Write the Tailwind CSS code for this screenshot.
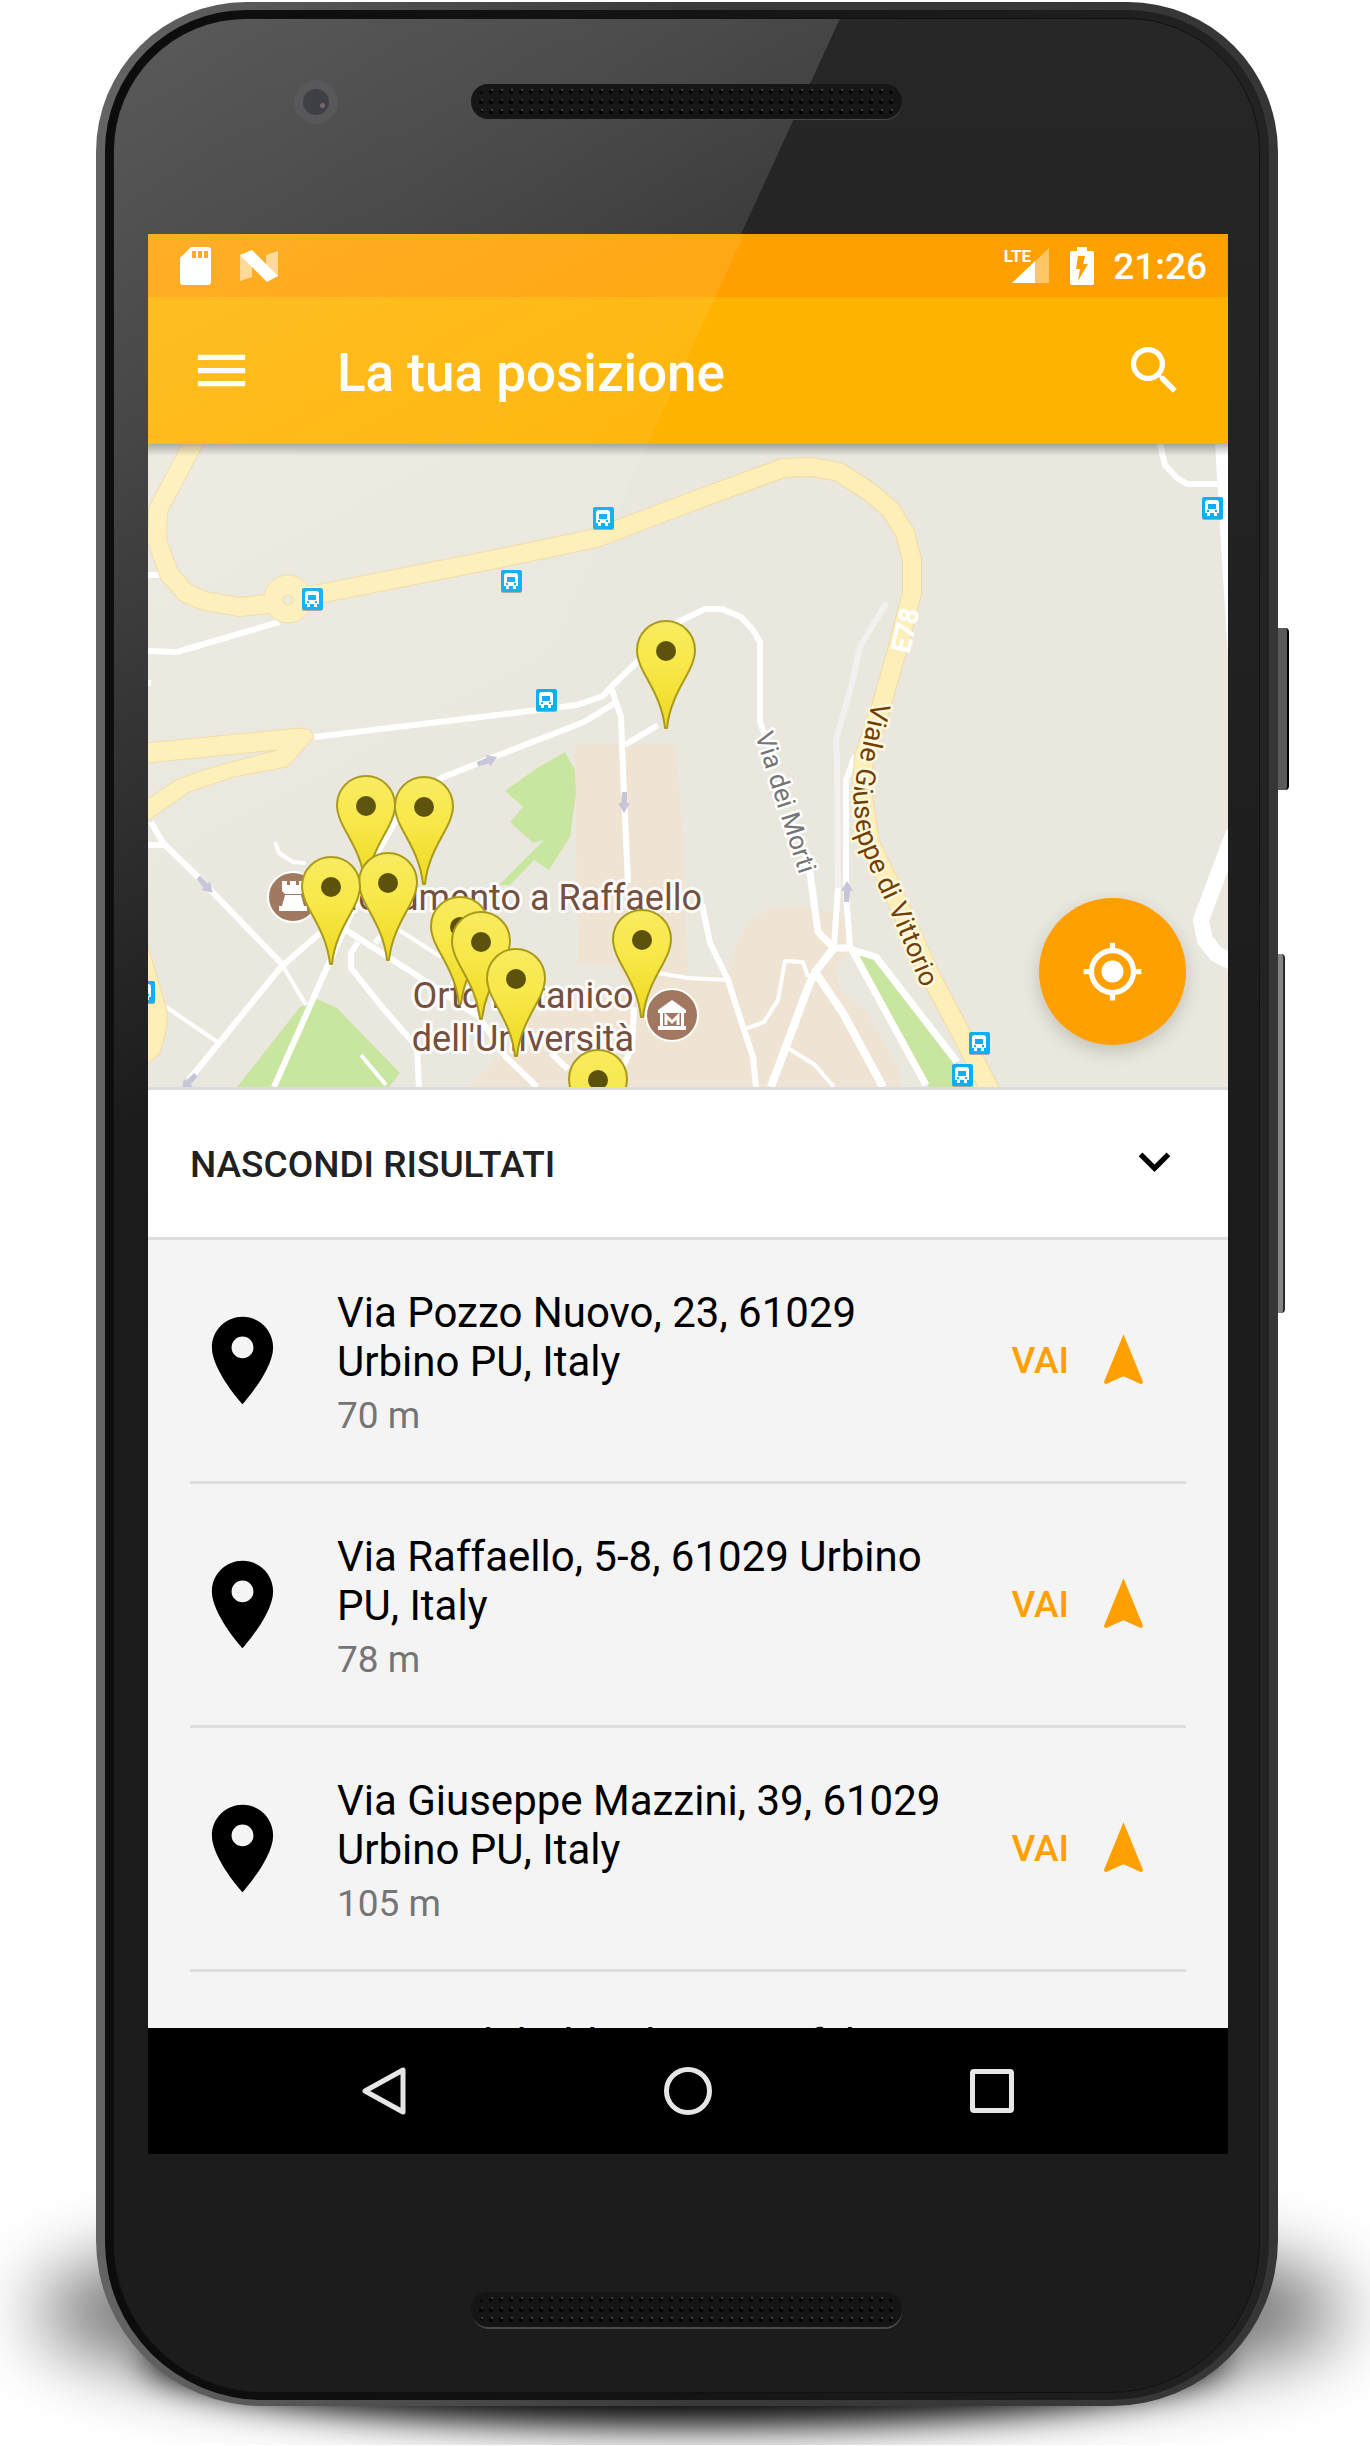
<!DOCTYPE html>
<html lang="it">
<head>
<meta charset="utf-8">
<meta name="viewport" content="width=device-width, initial-scale=1">
<title>La tua posizione</title>
<script src="https://cdn.jsdelivr.net/npm/@tailwindcss/browser@4"></script>
</head>
<body class="bg-white font-['Roboto',sans-serif]">
<div class="relative overflow-hidden pt-[2px] pr-[92px] pb-[39px] pl-[96px]">

  <!-- ground shadow -->
  <svg class="absolute inset-x-0 bottom-0 h-[346px] w-full" viewBox="0 0 1370 346" preserveAspectRatio="none" aria-hidden="true">
    <defs>
      <filter id="wide" x="-20%" y="-80%" width="140%" height="260%"><feGaussianBlur stdDeviation="38"/></filter>
      <filter id="soft" x="-20%" y="-80%" width="140%" height="260%"><feGaussianBlur stdDeviation="17"/></filter>
    </defs>
    <ellipse cx="690" cy="212" rx="655" ry="92" fill="#000" opacity=".6" filter="url(#wide)"/>
    <ellipse cx="685" cy="258" rx="540" ry="66" fill="#000" filter="url(#soft)"/>
  </svg>

  <div class="relative">
    <!-- side keys -->
    <div class="absolute top-[626px] left-full h-[162px] w-[11px] rounded-r-sm border-r-2 border-black bg-[#5a5a5a]"></div>
    <div class="absolute top-[952px] left-full h-[359px] w-[7px] rounded-r-sm border-r-2 border-[#2a2a2a] bg-[#858585]"></div>

    <div class="rounded-t-[150px] rounded-b-[166px] bg-linear-to-r from-[#646465] via-[#3a3a3b] to-[#363637] px-[9px] pt-[8px] pb-[6px]">
      <div class="rounded-t-[141px] rounded-b-[158px] bg-linear-to-r from-[#0c0c0c] via-[#141414] to-[#232323] pt-[8px] pr-[9px] pb-[7px] pl-[8px]">
        <div class="relative overflow-hidden rounded-t-[133px] rounded-b-[150px] border border-[#111] bg-linear-to-b from-[#272728] via-[#1b1b1c] to-[#1c1c1d]">
          <svg class="absolute inset-x-0 top-0 h-[1600px] w-full" viewBox="0 0 1147 1600" preserveAspectRatio="none" aria-hidden="true">
            <defs><linearGradient id="glare" gradientUnits="userSpaceOnUse" x1="0" y1="0" x2="520" y2="760">
              <stop offset="0" stop-color="#fff" stop-opacity=".24"/><stop offset=".35" stop-color="#fff" stop-opacity=".17"/><stop offset="1" stop-color="#fff" stop-opacity="0"/>
            </linearGradient></defs>
            <path d="M0 0H727L0 1580Z" fill="url(#glare)"/>
          </svg>

          <!-- upper bezel -->
          <div class="relative grid h-[215px] grid-cols-[1fr_432px_1fr] items-center pb-[50px]">
            <div class="ml-[180px] flex size-[44px] items-center justify-center rounded-full bg-[#58585a]">
              <div class="flex size-[26px] items-center justify-end rounded-full bg-[#3f3f46] pt-2 pr-1"><div class="size-[5px] rounded-full bg-[#7c6468]"></div></div>
            </div>
            <svg class="h-[36px] w-full" viewBox="0 0 432 36" aria-hidden="true">
              <defs><pattern id="holes" width="10" height="20" patternUnits="userSpaceOnUse" patternTransform="translate(5 -2)">
                <circle cx="5" cy="10" r="2" fill="#000"/><circle cx="6" cy="8" r="1" fill="#4c4c4c"/>
                <circle cx="5" cy="0" r="2" fill="#000"/><circle cx="5" cy="20" r="2" fill="#000"/><circle cx="6" cy="18" r="1" fill="#3c3c3c"/>
              </pattern></defs>
              <rect x="1" y="1" width="430" height="35" rx="17" fill="#4a4a4a"/>
              <rect width="431" height="35" rx="17" fill="#161616"/>
              <rect x="6" y="4" width="420" height="28" rx="14" fill="url(#holes)"/>
            </svg>
          </div>

          <!-- screen -->
          <main class="relative mr-[31px] ml-[34px] overflow-hidden bg-[#f4f4f4]">
            <div class="flex h-[63px] items-center bg-[#ffa000] pr-[21px] pl-[32px] text-white">
              <svg class="h-[38px] w-[31px]" viewBox="0 0 31 38" fill="#fff" aria-hidden="true"><path fill-rule="evenodd" d="M11 0H28a3 3 0 0 1 3 3V35a3 3 0 0 1-3 3H3a3 3 0 0 1-3-3V11ZM12 4v7h4V4ZM18 4v7h4V4ZM24 4v7h4V4Z"/></svg>
              <svg class="ml-[29px] h-[32px] w-[38px]" viewBox="0 0 38 32" fill="#fff" aria-hidden="true"><path opacity=".55" d="M0 4 12 12V27L0 31ZM26 5 38 1V27L26 19Z"/><path d="M0 5 12 0 38 26 27 32Z"/></svg>
              <div class="relative ml-auto h-[38px] w-[46px]">
                <svg class="size-full" viewBox="0 0 46 38" fill="#fff" aria-hidden="true"><path opacity=".4" d="M46 1V36H9Z"/><path d="M32 14V36H9Z"/><path d="M0 0H28V19H0Z" fill="#ffa000"/></svg>
                <span class="absolute top-0 right-[18px] text-[17px] leading-[18px] font-bold">LTE</span>
              </div>
              <svg class="ml-[21px] h-[38px] w-[24px]" viewBox="0 0 24 38" fill="#fff" aria-hidden="true"><path fill-rule="evenodd" d="M7 0H17V4H22a2 2 0 0 1 2 2V36a2 2 0 0 1-2 2H2a2 2 0 0 1-2-2V6a2 2 0 0 1 2-2H7ZM8 9 6 22H10L8 34 18 17H13L15 9Z"/></svg>
              <time class="ml-[19px] pt-[2px] text-[37px] leading-[43px] font-medium">21:26</time>
            </div>

            <header class="flex h-[147px] items-center bg-[#ffb300] px-[42px] text-white">
              <button type="button" aria-label="Menu" class="size-[63px]"><svg viewBox="0 0 24 24" fill="#fff"><path d="M3 18h18v-2H3v2zm0-5h18v-2H3v2zm0-7v2h18V6H3z"/></svg></button>
              <h1 class="ml-[84px] flex-1 pt-1 text-[53px] leading-[62px] font-medium">La tua posizione</h1>
              <button type="button" aria-label="Cerca" class="size-[63px]"><svg viewBox="0 0 24 24" fill="#fff"><path d="M15.5 14h-.79l-.28-.27A6.471 6.471 0 0 0 16 9.5 6.5 6.5 0 1 0 9.5 16c1.61 0 3.09-.59 4.23-1.57l.27.28v.79l5 4.99L20.49 19l-4.99-5zm-6 0C7.01 14 5 11.99 5 9.5S7.01 5 9.5 5 14 7.01 14 9.5 11.99 14 9.5 14z"/></svg></button>
            </header>

            <section class="relative" aria-label="Mappa">
              <svg class="block w-full" viewBox="0 0 1080 643" fill="none" stroke-linejoin="round">
                <defs>
                  <linearGradient id="pinfill" x1="0" y1="0" x2="0" y2="1"><stop offset="0" stop-color="#f8eb5f"/><stop offset=".4" stop-color="#f8e84a"/><stop offset="1" stop-color="#eed91f"/></linearGradient>
                  <g id="pin"><path d="M0 1C16 1 29 14 29 30 29 52 5 70 1 108H-1C-5 70-29 52-29 30-29 14-16 1 0 1Z" fill="url(#pinfill)" stroke="#a99a1c" stroke-width="2"/><circle cy="31" r="10" fill="#5c520c"/></g>
                  <g id="bus"><rect x="-10" y="-10" width="21" height="22" rx="2" fill="#a9a79e"/><rect x="-10" y="-11" width="21" height="22" rx="2" fill="#0daef2"/><path fill="#fff" fill-rule="evenodd" d="M-4-8H4Q7-8 7-5V5H5V8H2V5H-2V8H-5V5H-7V-5Q-7-8-4-8ZM-4-4V1H4V-4ZM-5 2V4H-3V2ZM3 2V4H5V2Z"/></g>
                  <path id="flow" d="M-2-10H3V1H6L0 11-6 1H-3Z" fill="#c6c6d8"/>
                  <path id="viale" d="M724 258 713 309 705 350 709 393 724 429 746 476 784 568"/>
                  <path id="morti" d="M607 291 635 379 656 445"/>
                </defs>
                <rect width="1080" height="643" fill="#eae8de"/>
                <path fill="#efe4d3" d="M427 300H528L534 380 540 533 581 530 590 495 605 474 626 463H667L700 475 705 503 688 523 692 546 719 569 750 623 753 643H320L344 619 379 573 482 549 470 523 430 519Z"/>
                <g fill="#c9e6a1">
                  <path d="M417 308 427 326 428 349 422 393 401 426 386 416 362 441H351L396 396 385 399 362 378 375 363 357 347 389 324Z"/>
                  <path d="M152 563 169 555 189 564 252 629 241 643H89Z"/>
                  <path d="M710 509 728 514 809 618 826 643H781Z"/>
                </g>
                <!-- minor roads -->
                <g stroke="#fff" stroke-width="6">
                  <path d="M0 207 29 208 131 178M0 131H14M0 239H3"/>
                  <path d="M166 293 382 267 429 261 455 252 463 243 489 218 530 178 557 165H574L593 173 605 186 612 198V278L620 300"/>
                  <path d="M463 243 473 273 475 326 480 439"/>
                  <path d="M467 259 436 278 351 311 293 334 248 376 227 413 196 486 181 519 126 643"/>
                  <path d="M477 301 510 281"/>
                  <path d="M659 420 662 429 670 488 686 504H702" stroke-width="7"/>
                  <path d="M707 312 698 336V449L702 504"/>
                  <path d="M690 444 686 503"/>
                  <path d="M1012 0 1017 21 1029 34 1039 40H1069"/>
                  <path d="M686 504 667 528 659 546 623 643M667 528 695 569 735 643" stroke-width="8"/>
                  <path d="M702 505 728 513 809 618M704 506 778 641" stroke-width="7"/>
                  <path d="M554 460 562 499 580 536 595 583 605 613 608 643"/>
                  <path d="M660 533 655 518 637 517 630 556 616 578 597 585M510 529 540 534 580 536M640 604 667 621 686 643" stroke-width="4"/>
                  <path d="M3 378 15 399 50 433 133 519M0 401H15"/>
                  <path d="M133 519 158 561M15 561 71 599" stroke-width="4"/>
                  <path d="M172 489 133 523 71 599 41 636"/>
                  <path d="M127 398 131 409 145 418 158 419M251 486 293 513M213 611 238 641" stroke-width="4"/>
                  <path d="M198 486 265 529 331 573 358 613 389 643M210 498 203 509V524L234 563 269 603 271 643M227 499 240 484M486 563 484 603 472 629M403 609 420 625"/>
                  <path d="M1086 388 1053 476 1057 496 1068 510 1084 518" stroke-width="16" stroke-linejoin="miter"/>
                </g>
                <path d="M738 159 712 203 704 239 688 296 689 316 690 444" stroke="#f3f0ef" stroke-width="6"/>
                <path d="M1067 0H1080V213L1072 83Z" fill="#fff"/>
                <!-- main roads -->
                <g fill="#feefb8" stroke="#eedba6" stroke-width="1">
                  <path d="M-2 299 151 284 162 286 166 293 139 323 86 333 41 348-2 378V356L28 336 55 326 83 318 129 306-2 319Z"/>
                  <path d="M-2 495 7 526 19 566V583L12 609-2 621Z"/>
                  <circle cx="140" cy="155" r="24"/>
                </g>
                <path d="M47-4 10 66 9 96 21 130 38 149 57 157 91 163 119 160 140 155 176 149 358 113 448 94 540 59 635 24 664 23 691 28 722 48 743 66 757 89 764 116V149L750 203 733 263 716 313 714 346 722 399 743 443 781 529 815 593 843 648" stroke="#eedba6" stroke-width="20"/>
                <path d="M47-4 10 66 9 96 21 130 38 149 57 157 91 163 119 160 140 155 176 149 358 113 448 94 540 59 635 24 664 23 691 28 722 48 743 66 757 89 764 116V149L750 203 733 263 716 313 714 346 722 399 743 443 781 529 815 593 843 648" stroke="#feefb8" stroke-width="18"/>
                <circle cx="140" cy="155" r="23" fill="#feefb8"/><circle cx="140" cy="156" r="5" fill="#f1ead0" stroke="#e5d9b0"/>
                <use href="#flow" transform="translate(339 317) rotate(-112)"/><use href="#flow" x="476" y="358"/>
                <use href="#flow" transform="translate(699 448) rotate(180)"/><use href="#flow" transform="translate(57 441) rotate(-45)"/><use href="#flow" transform="translate(41 638) rotate(40)"/>
                <!-- transit stops -->
                <use href="#bus" x="455" y="74"/><use href="#bus" x="363" y="137"/><use href="#bus" x="164" y="155"/><use href="#bus" x="398" y="256"/>
                <use href="#bus" x="1064" y="64"/><use href="#bus" x="-4" y="548"/><use href="#bus" x="831" y="599"/><use href="#bus" x="814" y="631"/>
                <!-- points of interest -->
                <g stroke="#fff" stroke-width="2" fill="#a1785f"><circle cx="145" cy="453" r="25"/><circle cx="524" cy="571" r="26"/></g>
                <path fill="#fff" d="M134 437H139V441H142V437H148V441H151V437H156V447L153 450H137L134 447ZM137 451H153L156 462H159V467H131V462H134Z"/>
                <path fill="#fff" fill-rule="evenodd" d="M524 556 538 566V569H536V582H538V586H510V582H512V569H510V566ZM515 569V582H533V569Z"/>
                <path d="M518 581V572L524 578 530 572V581" stroke="#fff" stroke-width="3" stroke-linejoin="miter"/>
                <!-- labels -->
                <g class="font-['Roboto',sans-serif]" stroke-linejoin="round" paint-order="stroke">
                  <g fill="#75503f" stroke="#fff" stroke-opacity=".85" stroke-width="6" font-size="36">
                    <text x="554" y="466" text-anchor="end">Monumento a Raffaello</text>
                    <text x="375" y="564" text-anchor="middle">Orto Botanico</text>
                    <text x="375" y="607" text-anchor="middle">dell'Università</text>
                  </g>
                  <text fill="#fff" font-size="26" font-weight="500" stroke="#fff" stroke-width="1" transform="translate(761 210) rotate(-77)">E78</text>
                  <text fill="#757575" stroke="#fff" stroke-width="5" font-size="26"><textPath href="#morti">Via dei Morti</textPath></text>
                  <text fill="#713f05" stroke="#fff8dc" stroke-width="5" font-size="27"><textPath href="#viale">Viale Giuseppe di Vittorio</textPath></text>
                </g>
                <!-- result markers -->
                <use href="#pin" x="518" y="176"/><use href="#pin" x="218" y="331"/><use href="#pin" x="276" y="332"/>
                <use href="#pin" x="240" y="408"/><use href="#pin" x="183" y="412"/><use href="#pin" x="312" y="452"/>
                <use href="#pin" x="333" y="467"/><use href="#pin" x="494" y="465"/><use href="#pin" x="368" y="504"/><use href="#pin" x="450" y="605"/>
              </svg>
              <div class="absolute inset-x-0 top-0 h-[12px] bg-linear-to-b from-black/30 to-transparent"></div>
              <button type="button" aria-label="La mia posizione" class="absolute right-[42px] bottom-[42px] flex size-[147px] items-center justify-center rounded-full bg-[#ffa000] shadow-[0_6px_18px_rgba(0,0,0,0.18)]">
                <svg class="size-[63px]" viewBox="0 0 24 24" fill="#fff"><circle cx="12" cy="12" r="4.2"/><path d="M20.94 11A8.994 8.994 0 0 0 13 3.06V1h-2v2.06A8.994 8.994 0 0 0 3.06 11H1v2h2.06A8.994 8.994 0 0 0 11 20.94V23h2v-2.06A8.994 8.994 0 0 0 20.94 13H23v-2h-2.06zM12 19c-3.87 0-7-3.13-7-7s3.13-7 7-7 7 3.13 7 7-3.13 7-7 7z"/></svg>
              </button>
            </section>

            <button type="button" class="flex h-[153px] w-full items-center justify-between border-y-[3px] border-[#dcdcdc] bg-white px-[42px] text-[37px] leading-[43px] font-medium text-[#212121]">
              <span class="pt-[2px]">NASCONDI RISULTATI</span>
              <svg class="size-[63px]" viewBox="0 0 24 24" fill="#000" aria-hidden="true"><path d="M7.41 7.84 12 12.42l4.59-4.58L18 9.25l-6 6-6-6z"/></svg>
            </button>

            <ul class="h-[788px] overflow-hidden px-[42px]">
              <li class="flex h-[244px] items-center border-b-[3px] border-[#dedede]">
                <svg class="size-[105px] shrink-0" viewBox="0 0 24 24" aria-hidden="true"><path d="M12 2C8.13 2 5 5.13 5 9c0 5.25 7 13 7 13s7-7.75 7-13c0-3.87-3.13-7-7-7zm0 9.5a2.5 2.5 0 0 1 0-5 2.5 2.5 0 0 1 0 5z"/></svg>
                <div class="ml-[42px] flex-1 pt-1">
                  <p class="text-[42px] leading-[49px] text-black">Via Pozzo Nuovo, 23, 61029<br>Urbino PU, Italy</p>
                  <p class="mt-2 text-[37px] leading-[43px] text-[#757575]">70 m</p>
                </div>
                <a href="#" class="mr-[31px] flex items-center gap-[23px] text-[37px] leading-[43px] font-medium text-[#ffa000]">VAI
                  <svg class="size-[63px]" viewBox="0 0 24 24" fill="#ffa000" aria-hidden="true"><path d="M12 2 4.5 20.29l.71.71L12 18l6.79 3 .71-.71z"/></svg></a>
              </li>
              <li class="flex h-[244px] items-center border-b-[3px] border-[#dedede]">
                <svg class="size-[105px] shrink-0" viewBox="0 0 24 24" aria-hidden="true"><path d="M12 2C8.13 2 5 5.13 5 9c0 5.25 7 13 7 13s7-7.75 7-13c0-3.87-3.13-7-7-7zm0 9.5a2.5 2.5 0 0 1 0-5 2.5 2.5 0 0 1 0 5z"/></svg>
                <div class="ml-[42px] flex-1 pt-1">
                  <p class="text-[42px] leading-[49px] text-black">Via Raffaello, 5-8, 61029 Urbino<br>PU, Italy</p>
                  <p class="mt-2 text-[37px] leading-[43px] text-[#757575]">78 m</p>
                </div>
                <a href="#" class="mr-[31px] flex items-center gap-[23px] text-[37px] leading-[43px] font-medium text-[#ffa000]">VAI
                  <svg class="size-[63px]" viewBox="0 0 24 24" fill="#ffa000" aria-hidden="true"><path d="M12 2 4.5 20.29l.71.71L12 18l6.79 3 .71-.71z"/></svg></a>
              </li>
              <li class="flex h-[244px] items-center border-b-[3px] border-[#dedede]">
                <svg class="size-[105px] shrink-0" viewBox="0 0 24 24" aria-hidden="true"><path d="M12 2C8.13 2 5 5.13 5 9c0 5.25 7 13 7 13s7-7.75 7-13c0-3.87-3.13-7-7-7zm0 9.5a2.5 2.5 0 0 1 0-5 2.5 2.5 0 0 1 0 5z"/></svg>
                <div class="ml-[42px] flex-1 pt-1">
                  <p class="text-[42px] leading-[49px] text-black">Via Giuseppe Mazzini, 39, 61029<br>Urbino PU, Italy</p>
                  <p class="mt-2 text-[37px] leading-[43px] text-[#757575]">105 m</p>
                </div>
                <a href="#" class="mr-[31px] flex items-center gap-[23px] text-[37px] leading-[43px] font-medium text-[#ffa000]">VAI
                  <svg class="size-[63px]" viewBox="0 0 24 24" fill="#ffa000" aria-hidden="true"><path d="M12 2 4.5 20.29l.71.71L12 18l6.79 3 .71-.71z"/></svg></a>
              </li>
              <li class="pt-[48px] pl-[147px]">
                <p class="text-[42px] leading-[49px] text-black">Via Guidobaldo da Montefeltro</p>
              </li>
            </ul>

            <nav class="flex h-[126px] items-center justify-center gap-[256px] bg-black" aria-label="Navigazione">
              <button type="button" aria-label="Indietro" class="size-[48px]"><svg viewBox="0 0 48 48" fill="none" stroke="#e6e6e6" stroke-width="5" stroke-linejoin="round"><path d="M43 3V45L5 24Z"/></svg></button>
              <button type="button" aria-label="Home" class="size-[48px]"><svg viewBox="0 0 48 48" fill="none" stroke="#e6e6e6" stroke-width="5"><circle cx="24" cy="24" r="21.5"/></svg></button>
              <button type="button" aria-label="Recenti" class="size-[48px]"><svg viewBox="0 0 48 48" fill="none" stroke="#e6e6e6" stroke-width="5"><rect x="4.500" y="4.500" width="39" height="39" rx="1.500"/></svg></button>
            </nav>

            <!-- reflection across the screen -->
            <svg class="pointer-events-none absolute inset-x-0 top-0 h-[700px] w-full" viewBox="0 0 1080 700" preserveAspectRatio="none" aria-hidden="true">
              <defs><linearGradient id="sheen" gradientUnits="userSpaceOnUse" x1="0" y1="0" x2="320" y2="600"><stop offset="0" stop-color="#fff" stop-opacity=".15"/><stop offset="1" stop-color="#fff" stop-opacity="0"/></linearGradient></defs>
              <path d="M0 0H596L276 700H0Z" fill="url(#sheen)"/>
            </svg>
          </main>

          <!-- lower bezel -->
          <div class="relative flex h-[238px] items-start justify-center pt-[138px]">
            <svg class="h-[38px] w-[432px]" viewBox="0 0 432 38" aria-hidden="true">
              <rect x="1" y="2" width="430" height="35" rx="17" fill="#484848"/>
              <rect width="431" height="35" rx="17" fill="#151515"/>
              <rect x="6" y="4" width="420" height="28" rx="14" fill="url(#holes)"/>
            </svg>
          </div>
        </div>
      </div>
    </div>
  </div>
</div>
</body>
</html>
